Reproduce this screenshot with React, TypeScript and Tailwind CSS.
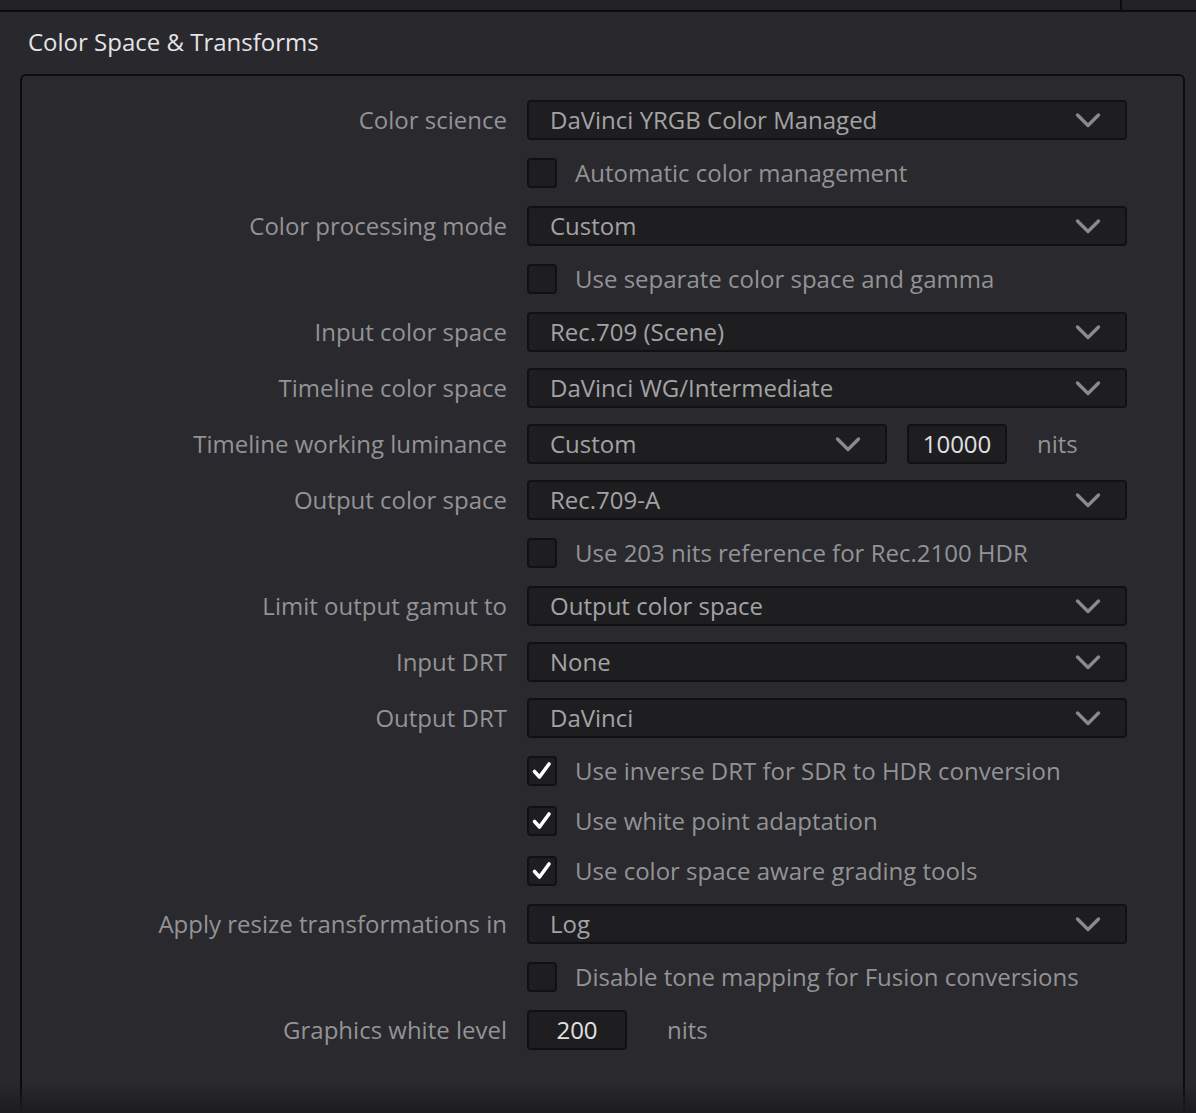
import React from "react";

const font = { fontFamily: '"Open Sans", "Noto Sans", sans-serif' };

function Chevron() {
  return (
    <svg width="26" height="17" viewBox="0 0 26 17" className="shrink-0">
      <path d="M2.5 3 L13 13.5 L23.5 3" fill="none" stroke="#8a8a8c" strokeWidth="3.4" strokeLinecap="round" strokeLinejoin="round" />
    </svg>
  );
}

function Select({ value, wide = true }: { value: string; wide?: boolean }) {
  return (
    <div
      className={`${wide ? "w-[600px]" : "w-[360px]"} h-[40px] flex items-center justify-between pl-[21px] pr-[24px] rounded-[4px] bg-[#1e1e20] border-2 border-[#111113] text-[#a3a3a5]`}
    >
      <span>{value}</span>
      <Chevron />
    </div>
  );
}

function NumBox({ value }: { value: string }) {
  return (
    <div className="w-[100px] h-[40px] flex items-center justify-center rounded-[4px] bg-[#1e1e20] border-2 border-[#111113] text-[#e0e0e2]">
      {value}
    </div>
  );
}

function Label({ text }: { text: string }) {
  return <div className="w-[485px] shrink-0 text-right text-[#939395]">{text}</div>;
}

function Row({ label, children }: { label?: string; children: React.ReactNode }) {
  return (
    <div className="flex items-center gap-[20px] h-[40px]">
      <Label text={label ?? ""} />
      {children}
    </div>
  );
}

function Check({ label, checked = false }: { label: string; checked?: boolean }) {
  return (
    <div className="flex items-center gap-[20px] h-[34px]">
      <div className="w-[485px] shrink-0" />
      <div className="flex items-center gap-[18px]">
        <div className="w-[30px] h-[30px] rounded-[4px] bg-[#1e1e20] border-2 border-[#111113] flex items-center justify-center">
          {checked && (
            <svg width="22" height="22" viewBox="0 0 22 22">
              <path d="M3.5 11.5 L8.5 17 L18 4" fill="none" stroke="#ffffff" strokeWidth="3.6" strokeLinecap="round" strokeLinejoin="round" />
            </svg>
          )}
        </div>
        <span className="text-[#939395]">{label}</span>
      </div>
    </div>
  );
}

export default function App() {
  return (
    <div className="w-[1196px] h-[1113px] overflow-hidden bg-[#28282d] relative text-[24px] leading-none" style={font}>
      {/* top strip */}
      <div className="h-[12px] bg-[#222226] border-b-2 border-[#0c0c0e] flex">
        <div className="w-[1122px] border-r-2 border-[#0c0c0e]" />
      </div>

      <div className="pl-[28px] h-[62px] flex items-center pb-[2px] text-[#e4e4e6]">Color Space & Transforms</div>

      <div className="ml-[20px] w-[1165px] h-[1100px] rounded-t-[6px] border-2 border-[#0c0c0e] bg-[#29292e] relative">
        <div className="flex flex-col gap-[16px] pt-[24px]">
          <Row label="Color science">
            <Select value="DaVinci YRGB Color Managed" />
          </Row>
          <Check label="Automatic color management" />
          <Row label="Color processing mode">
            <Select value="Custom" />
          </Row>
          <Check label="Use separate color space and gamma" />
          <Row label="Input color space">
            <Select value="Rec.709 (Scene)" />
          </Row>
          <Row label="Timeline color space">
            <Select value="DaVinci WG/Intermediate" />
          </Row>
          <Row label="Timeline working luminance">
            <Select value="Custom" wide={false} />
            <NumBox value="10000" />
            <span className="text-[#939395] ml-[10px]">nits</span>
          </Row>
          <Row label="Output color space">
            <Select value="Rec.709-A" />
          </Row>
          <Check label="Use 203 nits reference for Rec.2100 HDR" />
          <Row label="Limit output gamut to">
            <Select value="Output color space" />
          </Row>
          <Row label="Input DRT">
            <Select value="None" />
          </Row>
          <Row label="Output DRT">
            <Select value="DaVinci" />
          </Row>
          <Check label="Use inverse DRT for SDR to HDR conversion" checked />
          <Check label="Use white point adaptation" checked />
          <Check label="Use color space aware grading tools" checked />
          <Row label="Apply resize transformations in">
            <Select value="Log" />
          </Row>
          <Check label="Disable tone mapping for Fusion conversions" />
          <Row label="Graphics white level">
            <NumBox value="200" />
            <span className="text-[#939395] ml-[20px]">nits</span>
          </Row>
        </div>
      </div>

      {/* bottom fade */}
      <div className="absolute left-0 right-0 bottom-0 h-[30px] bg-gradient-to-b from-transparent to-[#1c1c20]" />
    </div>
  );
}
